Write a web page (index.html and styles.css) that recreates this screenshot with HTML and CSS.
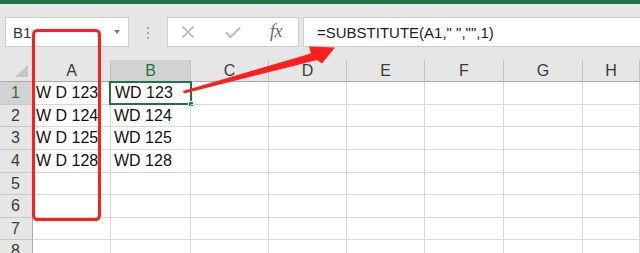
FILE: index.html
```html
<!DOCTYPE html>
<html>
<head>
<meta charset="utf-8">
<link rel="stylesheet" href="styles.css">
</head>
<body>
<div class="app">
  <div class="titlebar"></div>
  <div class="formula-row">
    <div class="namebox"><span class="ref">B1</span><span class="dd"></span></div>
    <div class="grip"><i></i><i></i><i></i></div>
    <div class="fxbox">
      <svg class="ico" width="14" height="12" viewBox="0 0 14 12"><path d="M1.5 0.5 L12.5 11.5 M12.5 0.5 L1.5 11.5" stroke="#bdbdbd" stroke-width="1.8" fill="none"/></svg>
      <svg class="ico" width="16" height="11" viewBox="0 0 16 11"><path d="M1 5.5 L5.5 10 L15 0.8" stroke="#bdbdbd" stroke-width="2.2" fill="none"/></svg>
      <span class="fx">fx</span>
    </div>
    <div class="formula">=SUBSTITUTE(A1," ","",1)</div>
  </div>
  <div class="sheet">
    <div class="hd corner"><svg width="13" height="12" viewBox="0 0 13 12"><polygon points="13,0 13,12 0,12" fill="#c4c4c4"/></svg></div>
    <div class="hd col">A</div>
    <div class="hd col sel">B</div>
    <div class="hd col">C</div>
    <div class="hd col">D</div>
    <div class="hd col">E</div>
    <div class="hd col">F</div>
    <div class="hd col">G</div>
    <div class="hd col">H</div>

    <div class="rh sel">1</div>
    <div class="c">W D 123</div>
    <div class="c active">WD 123<span class="selbox"><span class="handle"></span></span></div>
    <div class="c"></div><div class="c"></div><div class="c"></div><div class="c"></div><div class="c"></div><div class="c"></div>

    <div class="rh">2</div>
    <div class="c">W D 124</div>
    <div class="c">WD 124</div>
    <div class="c"></div><div class="c"></div><div class="c"></div><div class="c"></div><div class="c"></div><div class="c"></div>

    <div class="rh">3</div>
    <div class="c">W D 125</div>
    <div class="c">WD 125</div>
    <div class="c"></div><div class="c"></div><div class="c"></div><div class="c"></div><div class="c"></div><div class="c"></div>

    <div class="rh">4</div>
    <div class="c">W D 128</div>
    <div class="c">WD 128</div>
    <div class="c"></div><div class="c"></div><div class="c"></div><div class="c"></div><div class="c"></div><div class="c"></div>

    <div class="rh">5</div>
    <div class="c"></div><div class="c"></div><div class="c"></div><div class="c"></div><div class="c"></div><div class="c"></div><div class="c"></div><div class="c"></div>

    <div class="rh">6</div>
    <div class="c"></div><div class="c"></div><div class="c"></div><div class="c"></div><div class="c"></div><div class="c"></div><div class="c"></div><div class="c"></div>

    <div class="rh">7</div>
    <div class="c"></div><div class="c"></div><div class="c"></div><div class="c"></div><div class="c"></div><div class="c"></div><div class="c"></div><div class="c"></div>

    <div class="rh">8</div>
    <div class="c"></div><div class="c"></div><div class="c"></div><div class="c"></div><div class="c"></div><div class="c"></div><div class="c"></div><div class="c"></div>
  </div>
  <svg class="annot" width="640" height="253" viewBox="0 0 640 253">
    <rect x="33.5" y="30.5" width="66" height="189" rx="4" ry="4" fill="none" stroke="#ff1e1e" stroke-width="3"/>
    <polygon points="183,91 311,53.5 309,46.5 335,47.5 322,63.5 317,60 184,93.5" fill="#ff1e1e"/>
  </svg>
</div>
</body>
</html>
```
FILE: styles.css
```css
* { box-sizing: border-box; }
html, body { margin: 0; padding: 0; }
body {
  width: 640px;
  height: 253px;
  overflow: hidden;
  background: #ffffff;
  font-family: "Liberation Sans", Arial, sans-serif;
}
.app {
  position: relative;
  width: 640px;
  height: 253px;
  overflow: hidden;
}
.titlebar {
  height: 4px;
  background: #217346;
}
.formula-row {
  display: flex;
  align-items: stretch;
  height: 56px;
  padding: 13px 0 13px 5px;
  background: #e6e6e6;
}
.namebox {
  width: 124px;
  background: #ffffff;
  border: 1px solid #cfcfcf;
  display: flex;
  align-items: center;
  justify-content: space-between;
  padding: 0 8px 0 7px;
  font-size: 15px;
  color: #333333;
}
.dd {
  width: 0;
  height: 0;
  border-left: 3.5px solid transparent;
  border-right: 3.5px solid transparent;
  border-top: 4px solid #7a7a7a;
}
.grip {
  width: 38px;
  display: flex;
  flex-direction: column;
  align-items: center;
  justify-content: center;
  gap: 3px;
  padding-top: 1px;
}
.grip i {
  display: block;
  width: 2px;
  height: 2px;
  background: #a3a3a3;
}
.fxbox {
  width: 132px;
  background: #ffffff;
  border: 1px solid #cfcfcf;
  display: flex;
  align-items: center;
  padding: 0 0 0 13px;
}
.fxbox .ico { display: block; }
.fxbox .ico:nth-child(2) { margin-left: 30px; }
.fx {
  margin-left: 29px;
  font-family: "Liberation Serif", "Times New Roman", serif;
  font-style: italic;
  font-size: 18px;
  color: #6a6a6a;
  letter-spacing: -0.5px;
  position: relative;
  top: -1px;
}
.formula {
  flex: 1;
  margin-left: 4px;
  margin-right: -4px;
  background: #ffffff;
  border: 1px solid #cfcfcf;
  display: flex;
  align-items: center;
  padding-left: 13px;
  font-size: 15px;
  color: #222222;
  white-space: pre;
}
.sheet {
  display: grid;
  grid-template-columns: 33px 78px 80px 78px 78px 78px 79px 79px 1fr;
  grid-template-rows: 22px 23px 22px 23px 23px 22px 23px 22px 22px;
  background: #ffffff;
}
.hd {
  background: #e6e6e6;
  border-bottom: 1px solid #ababab;
  border-right: 1px solid #c4c4c4;
  display: flex;
  align-items: center;
  justify-content: center;
  font-size: 16px;
  color: #3a3a3a;
  padding-top: 1px;
}
.hd.corner {
  justify-content: flex-end;
  align-items: flex-end;
  padding: 0 4px 4px 0;
  border-right: 1px solid #ababab;
}
.hd.corner svg { display: block; }
.hd.sel {
  background: #d2d2d2;
  color: #217346;
}
.rh {
  background: #e6e6e6;
  border-right: 1px solid #ababab;
  border-bottom: 1px solid #c9c9c9;
  display: flex;
  align-items: center;
  justify-content: center;
  font-size: 16px;
  color: #3a3a3a;
  padding-right: 1px;
}
.rh.sel {
  background: #d2d2d2;
  color: #217346;
}
.c {
  position: relative;
  border-right: 1px solid #d9d9d9;
  border-bottom: 1px solid #d9d9d9;
  display: flex;
  align-items: center;
  padding-left: 3px;
  font-size: 16px;
  color: #111111;
  white-space: pre;
}
.c.active { padding-left: 4px; }
.selbox {
  position: absolute;
  left: -2px;
  top: -1px;
  right: -2px;
  bottom: -1px;
  border: 2px solid #217346;
}
.handle {
  position: absolute;
  right: -4px;
  bottom: -4px;
  width: 6px;
  height: 6px;
  background: #217346;
  border: 1px solid #ffffff;
}
.annot {
  position: absolute;
  left: 0;
  top: 0;
  pointer-events: none;
}
```
